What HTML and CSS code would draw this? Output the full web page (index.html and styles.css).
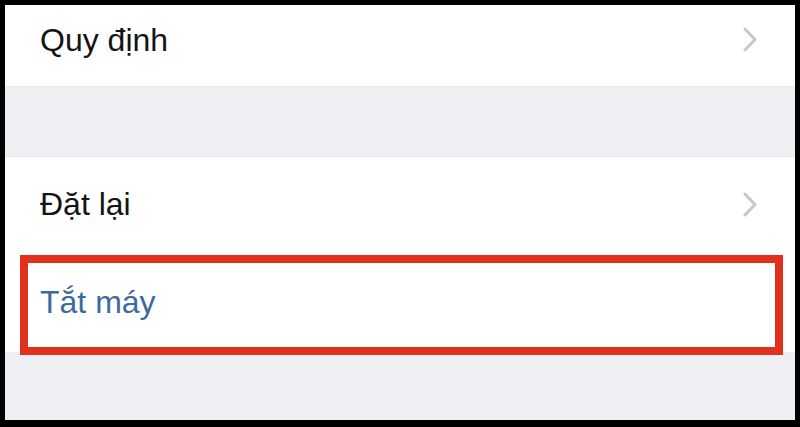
FILE: index.html
```html
<!DOCTYPE html>
<html lang="vi">
<head>
    <meta charset="UTF-8">
    <meta name="viewport" content="width=device-width, initial-scale=1.0">
    <title>Cài đặt chung</title>
    <link rel="stylesheet" href="styles.css">
</head>
<body>
    <main class="screen">
        <div class="row row-first">
            <span class="label">Quy định</span>
            <svg class="chevron" width="14" height="25" viewBox="0 0 14 25">
                <path d="M2 2 L12 12.5 L2 23" />
            </svg>
        </div>
        <div class="gap"></div>
        <div class="row row-reset">
            <span class="label">Đặt lại</span>
            <svg class="chevron" width="14" height="25" viewBox="0 0 14 25">
                <path d="M2 2 L12 12.5 L2 23" />
            </svg>
        </div>
        <div class="row row-off">
            <span class="label action">Tắt máy</span>
        </div>
        <!-- red frame drawn over the "Tắt máy" row -->
        <div class="highlight"></div>
    </main>
</body>
</html>
```

FILE: styles.css
```css
html, body {
    margin: 0;
    padding: 0;
    background-color: #000;
}

.screen {
    position: relative;
    margin: 5px 5px 7px 5px;
    height: 415px;
    background-color: #efeff3;
    font-family: "Liberation Sans", Arial, sans-serif;
    font-size: 32px;
    line-height: 32px;
    overflow: hidden;
}

.row {
    display: flex;
    align-items: center;
    justify-content: space-between;
    box-sizing: border-box;
    padding-left: 35px;
    padding-right: 38px;
    background-color: #fff;
}

.row-first {
    height: 82px;
    padding-bottom: 12px;
    border-bottom: 1px solid #e6e6ea;
}

.gap {
    height: 69px;
}

.row-reset {
    height: 95px;
    border-top: 1px solid #e6e6ea;
}

.row-off {
    height: 101px;
}

.label {
    color: #141414;
}

.action {
    color: #3c6b9f;
}

.chevron {
    display: block;
    fill: none;
    stroke: #c6c6cb;
    stroke-width: 3;
    stroke-linecap: round;
    stroke-linejoin: round;
}

.highlight {
    position: absolute;
    left: 15px;
    top: 250px;
    width: 763px;
    height: 100px;
    box-sizing: border-box;
    border: 8px solid #e1311d;
}
```
